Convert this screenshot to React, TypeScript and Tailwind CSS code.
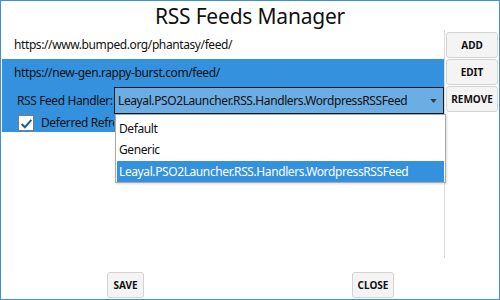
import type { ReactNode } from "react";

const font = { fontFamily: '"Noto Sans", "Open Sans", "Liberation Sans", sans-serif' };

function SideButton({ children }: { children: ReactNode }) {
  return (
    <button className="flex h-[26px] w-[52px] items-center justify-center rounded-[3px] border border-[#d4d4d4] bg-[#f4f4f4] text-[10px] font-bold text-[#111]">
      {children}
    </button>
  );
}

function CheckIcon() {
  return (
    <svg viewBox="0 0 16 16" className="h-[13px] w-[13px]">
      <path d="M2 8.5 L6 12.5 L14 3.5" fill="none" stroke="#1f5f9e" strokeWidth="2.6" />
    </svg>
  );
}

export default function App() {
  return (
    <div
      className="flex h-[300px] w-[500px] flex-col border border-[#3d8fd7] bg-white text-[#111]"
      style={font}
    >
      <h1 className="h-[29px] text-center text-[21px] leading-[30px] tracking-[-0.2px] text-[#111]">
        RSS Feeds Manager
      </h1>

      <div className="flex h-[228px]">
        <div className="relative ml-px w-[443px] border-r border-[#dcdcdc] text-[12px] tracking-[-0.4px]">
          <div className="flex h-[29px] items-center pl-[12px]">https://www.bumped.org/phantasy/feed/</div>
          <div className="h-[73px] bg-[#3491dd]">
            <div className="flex h-[28px] items-center pl-[12px]">https://new-gen.rappy-burst.com/feed/</div>
            <div className="flex items-center pl-[15px]">
              <span className="w-[97px] shrink-0 whitespace-nowrap">RSS Feed Handler:</span>
              <div className="flex h-[27px] w-[330px] shrink-0 items-center justify-between border border-[#1a1a1a] bg-[#6aaee3] pl-[3px] pr-[6px]">
                <span className="whitespace-nowrap">Leayal.PSO2Launcher.RSS.Handlers.WordpressRSSFeed</span>
                <svg viewBox="0 0 8 5" className="h-[4px] w-[7px]">
                  <path d="M0 0 L8 0 L4 5 Z" fill="#3a3a3a" />
                </svg>
              </div>
            </div>
            <div className="flex h-[18px] items-center pl-[16px]">
              <span className="flex h-[16px] w-[16px] shrink-0 items-center justify-center border border-[#7a7a7a] bg-white">
                <CheckIcon />
              </span>
              <span className="ml-[7px] w-[73px] overflow-hidden whitespace-nowrap">Deferred Refresh</span>
            </div>
          </div>

          <div className="absolute left-[113px] top-[84px] flex h-[69px] w-[331px] flex-col border border-[#a9a9a9] bg-white px-px pt-[3px] shadow-[1px_1px_2px_rgba(0,0,0,0.15)]">
            <div className="flex h-[22px] items-center pl-[2px]">Default</div>
            <div className="flex h-[22px] items-center pl-[2px]">Generic</div>
            <div className="flex h-[21px] items-center bg-[#3491dd] pl-[2px] text-white">
              Leayal.PSO2Launcher.RSS.Handlers.WordpressRSSFeed
            </div>
          </div>
        </div>

        <div className="ml-px mt-[2px] flex flex-col gap-px">
          <SideButton>ADD</SideButton>
          <SideButton>EDIT</SideButton>
          <SideButton>REMOVE</SideButton>
        </div>
      </div>

      <div className="flex flex-1 items-end pb-px">
        <div className="flex items-center gap-[208px] pl-[106px]">
          <button className="flex h-[26px] w-[37px] items-center justify-center rounded-[3px] border border-[#d4d4d4] bg-[#f4f4f4] text-[10px] font-bold">
            SAVE
          </button>
          <button className="flex h-[26px] w-[42px] items-center justify-center rounded-[3px] border border-[#d4d4d4] bg-[#f4f4f4] text-[10px] font-bold">
            CLOSE
          </button>
        </div>
      </div>
    </div>
  );
}
